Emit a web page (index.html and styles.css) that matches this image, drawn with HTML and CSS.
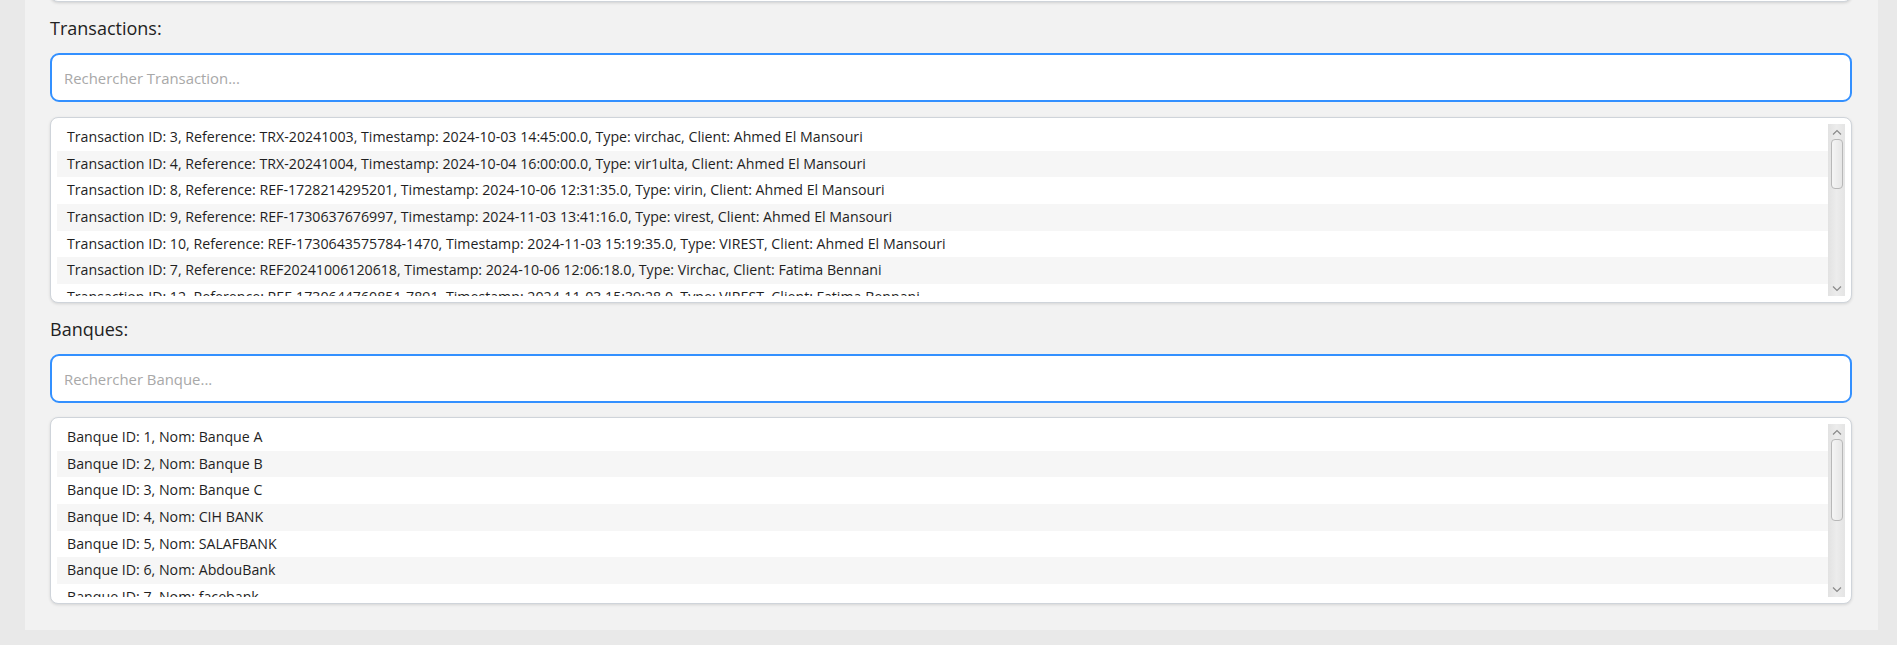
FILE: index.html
```html
<!DOCTYPE html>
<html lang="fr">
<head>
<meta charset="utf-8">
<title>Transactions et Banques</title>
<link rel="stylesheet" href="styles.css">
</head>
<body>
<div class="panel">
  <div class="top-card"></div>

  <div class="section-label">Transactions:</div>
  <input class="search" type="text" placeholder="Rechercher Transaction...">
  <div class="list-box tx-list">
    <div class="rows">
      <div class="row">Transaction ID: 3, Reference: TRX-20241003, Timestamp: 2024-10-03 14:45:00.0, Type: virchac, Client: Ahmed El Mansouri</div>
      <div class="row">Transaction ID: 4, Reference: TRX-20241004, Timestamp: 2024-10-04 16:00:00.0, Type: vir1ulta, Client: Ahmed El Mansouri</div>
      <div class="row">Transaction ID: 8, Reference: REF-1728214295201, Timestamp: 2024-10-06 12:31:35.0, Type: virin, Client: Ahmed El Mansouri</div>
      <div class="row">Transaction ID: 9, Reference: REF-1730637676997, Timestamp: 2024-11-03 13:41:16.0, Type: virest, Client: Ahmed El Mansouri</div>
      <div class="row">Transaction ID: 10, Reference: REF-1730643575784-1470, Timestamp: 2024-11-03 15:19:35.0, Type: VIREST, Client: Ahmed El Mansouri</div>
      <div class="row">Transaction ID: 7, Reference: REF20241006120618, Timestamp: 2024-10-06 12:06:18.0, Type: Virchac, Client: Fatima Bennani</div>
      <div class="row">Transaction ID: 12, Reference: REF-1730644760851-7891, Timestamp: 2024-11-03 15:39:28.0, Type: VIREST, Client: Fatima Bennani</div>
      <div class="row">Transaction ID: 13, Reference: REF-1730645012345-2210, Timestamp: 2024-11-03 15:43:32.0, Type: VIREST, Client: Fatima Bennani</div>
    </div>
    <div class="scrollbar">
      <div class="arrow arrow-up"><svg width="10" height="6" viewBox="0 0 10 6"><path d="M1 5.5 L5 1.5 L9 5.5" fill="none" stroke="#8a8a8a" stroke-width="1.2"/></svg></div>
      <div class="thumb thumb-tx"></div>
      <div class="track-fill"></div>
      <div class="arrow arrow-down"><svg width="10" height="6" viewBox="0 0 10 6"><path d="M1 0.5 L5 4.5 L9 0.5" fill="none" stroke="#8a8a8a" stroke-width="1.2"/></svg></div>
    </div>
  </div>

  <div class="section-label">Banques:</div>
  <input class="search" type="text" placeholder="Rechercher Banque...">
  <div class="list-box bank-list">
    <div class="rows">
      <div class="row">Banque ID: 1, Nom: Banque A</div>
      <div class="row">Banque ID: 2, Nom: Banque B</div>
      <div class="row">Banque ID: 3, Nom: Banque C</div>
      <div class="row">Banque ID: 4, Nom: CIH BANK</div>
      <div class="row">Banque ID: 5, Nom: SALAFBANK</div>
      <div class="row">Banque ID: 6, Nom: AbdouBank</div>
      <div class="row">Banque ID: 7, Nom: facebank</div>
      <div class="row">Banque ID: 8, Nom: Banque D</div>
    </div>
    <div class="scrollbar">
      <div class="arrow arrow-up"><svg width="10" height="6" viewBox="0 0 10 6"><path d="M1 5.5 L5 1.5 L9 5.5" fill="none" stroke="#8a8a8a" stroke-width="1.2"/></svg></div>
      <div class="thumb thumb-bank"></div>
      <div class="track-fill"></div>
      <div class="arrow arrow-down"><svg width="10" height="6" viewBox="0 0 10 6"><path d="M1 0.5 L5 4.5 L9 0.5" fill="none" stroke="#8a8a8a" stroke-width="1.2"/></svg></div>
    </div>
  </div>
</div>
</body>
</html>
```
FILE: styles.css
```css
html, body {
  margin: 0;
  padding: 0;
}
body {
  background: #e9e9e9;
  font-family: "Open Sans", "Noto Sans", "Liberation Sans", sans-serif;
  color: #2e2e2e;
  overflow: hidden;
  height: 645px;
}
.panel {
  margin-left: 25px;
  width: 1853px;
  box-sizing: border-box;
  padding: 0 26px 26px 25px;
  background: #f2f2f2;
  display: flex;
  flex-direction: column;
}
.top-card {
  height: 40px;
  margin-top: -38px;
  box-sizing: border-box;
  background: #ffffff;
  border: 1px solid #cfd4da;
  border-radius: 8px;
  box-shadow: 0 1px 3px rgba(0, 0, 0, 0.14);
}
.section-label {
  margin-top: 15px;
  height: 23px;
  line-height: 23px;
  font-size: 18px;
  color: #222222;
}
.search {
  margin: 13px 0 0 0;
  height: 49px;
  box-sizing: border-box;
  border: 2px solid #3390ff;
  border-radius: 9px;
  background: #ffffff;
  padding: 0 12px;
  font-family: inherit;
  font-size: 14.9px;
  color: #333;
  outline: none;
}
.search::placeholder {
  color: #a8a8a8;
}
.list-box {
  margin-top: 15px;
  box-sizing: border-box;
  background: #ffffff;
  border: 1px solid #cfd4da;
  border-radius: 8px;
  box-shadow: 0 1px 3px rgba(0, 0, 0, 0.12);
  padding: 6px;
  display: flex;
}
.tx-list {
  height: 186px;
}
.bank-list {
  margin-top: 14px;
  height: 187px;
}
.rows {
  flex: 1;
  overflow: hidden;
  min-width: 0;
}
.row {
  height: 26.67px;
  line-height: 26.67px;
  padding-left: 10px;
  font-size: 14.2px;
  white-space: nowrap;
  color: #1f1f1f;
}
.row:nth-child(even) {
  background: #f6f6f6;
}
.scrollbar {
  width: 17px;
  flex: none;
  display: flex;
  flex-direction: column;
  background: linear-gradient(to right, #e2e2e2, #ececec 50%, #e4e4e4);
}
.arrow {
  height: 15px;
  display: flex;
  align-items: center;
  justify-content: center;
  flex: none;
}
.arrow-down {
  height: 14px;
}
.thumb {
  flex: none;
  margin-left: 3px;
  margin-right: 2px;
  box-sizing: border-box;
  border: 1px solid #b8b8b8;
  border-radius: 4px;
  background: linear-gradient(to right, #f5f5f5, #e6e6e6);
}
.thumb-tx {
  height: 50px;
}
.thumb-bank {
  height: 82px;
}
.track-fill {
  flex: 1;
}
```
